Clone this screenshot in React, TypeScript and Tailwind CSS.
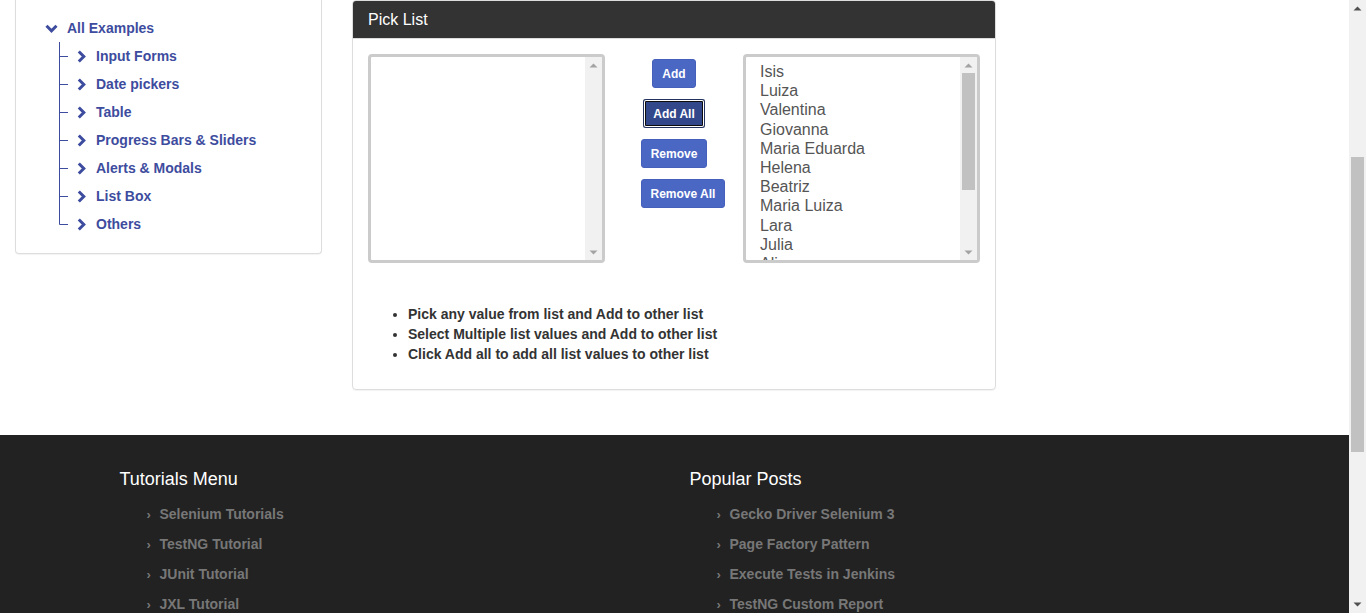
import React from 'react'

const examples = [
  'Input Forms',
  'Date pickers',
  'Table',
  'Progress Bars & Sliders',
  'Alerts & Modals',
  'List Box',
  'Others',
]

const names = [
  'Isis',
  'Luiza',
  'Valentina',
  'Giovanna',
  'Maria Eduarda',
  'Helena',
  'Beatriz',
  'Maria Luiza',
  'Lara',
  'Julia',
  'Alice',
]

const tutorials = ['Selenium Tutorials', 'TestNG Tutorial', 'JUnit Tutorial', 'JXL Tutorial']
const posts = ['Gecko Driver Selenium 3', 'Page Factory Pattern', 'Execute Tests in Jenkins', 'TestNG Custom Report']

function ChevronDown() {
  return (
    <svg width="13" height="9" viewBox="0 0 13 9" className="shrink-0">
      <polyline points="1.5,1.8 6.5,6.8 11.5,1.8" fill="none" stroke="#3d4c9e" strokeWidth="3" />
    </svg>
  )
}

function ChevronRight() {
  return (
    <svg width="9" height="13" viewBox="0 0 9 13" className="shrink-0">
      <polyline points="1.8,1.5 6.8,6.5 1.8,11.5" fill="none" stroke="#3d4c9e" strokeWidth="3" />
    </svg>
  )
}

function Connector({ last }: { last: boolean }) {
  return (
    <svg width="10" height="28" viewBox="0 0 10 28" className="shrink-0">
      <line x1="0.5" y1="0" x2="0.5" y2={last ? 14.5 : 28} stroke="#3d4c9e" strokeWidth="1" />
      <line x1="0.5" y1="14.5" x2="9" y2="14.5" stroke="#3d4c9e" strokeWidth="1" />
    </svg>
  )
}

function Arrow({ up, color }: { up: boolean; color: string }) {
  return (
    <svg width="9" height="5" viewBox="0 0 9 5">
      <polygon points={up ? '0.5,4.5 4.5,0.5 8.5,4.5' : '0.5,0.5 4.5,4.5 8.5,0.5'} fill={color} />
    </svg>
  )
}

function ListBox({ items, thumb }: { items: string[]; thumb?: boolean }) {
  return (
    <div className="w-[237px] h-[209px] border-[3px] border-[#cbcbcb] rounded-[4px] flex overflow-hidden bg-white">
      <div className="flex-1 overflow-hidden pl-[14px] pt-[5px] text-[16px] leading-[19.2px] text-[#555]">
        {items.map((n) => (
          <div key={n}>{n}</div>
        ))}
      </div>
      <div className="w-[17px] bg-[#f1f1f1] flex flex-col">
        <div className="h-[16px] flex items-center justify-center">
          <Arrow up color="#a3a3a3" />
        </div>
        <div className="flex-1 px-[2px]">
          {thumb && <div className="h-[117px] bg-[#c1c1c1]" />}
        </div>
        <div className="h-[16px] flex items-center justify-center">
          <Arrow up={false} color="#a3a3a3" />
        </div>
      </div>
    </div>
  )
}

function Btn({ label, focused }: { label: string; focused?: boolean }) {
  return (
    <div className="h-[29px] mb-[11px] whitespace-nowrap">
      <button
        className={
          focused
            ? 'h-[29px] px-[10px] rounded-[3px] text-[12px] font-bold text-white bg-[#32488b] shadow-[inset_0_0_0_1px_#22315e,inset_0_0_0_2px_#ffffff,inset_0_0_0_3px_#0d0d0d]'
            : 'h-[29px] px-[9px] rounded-[3px] text-[12px] font-bold text-white bg-[#4b67c4] border border-[#4560ba]'
        }
      >
        {label}
      </button>
    </div>
  )
}

function FooterCol({ title, links, pad }: { title: string; links: string[]; pad: string }) {
  return (
    <div className={`w-1/2 pr-[15px] ${pad}`}>
      <h3 className="text-[18px] leading-5 text-white">{title}</h3>
      <ul className="mt-[10px] pl-[27px]">
        {links.map((l) => (
          <li key={l} className="h-[30px] flex items-center text-[14px] font-bold text-[#777]">
            <span className="w-[13px] text-[13px] pt-[2px]">›</span>
            {l}
          </li>
        ))}
      </ul>
    </div>
  )
}

export default function App() {
  return (
    <div className="h-[613px] overflow-hidden flex bg-white font-['Liberation_Sans',Arial,sans-serif]">
      <div className="w-[1349px] shrink-0">
        <div className="h-[435px] flex">
          <div className="w-[337px] px-[15px]">
            <div className="border border-t-0 border-[#ddd] rounded-b-[4px] pt-[14px] pb-[15px] shadow-[0_1px_1px_rgba(0,0,0,0.05)]">
              <div className="h-[28px] pl-[29px] flex items-center">
                <ChevronDown />
                <span className="ml-[9px] text-[14px] font-bold text-[#3d4c9e]">All Examples</span>
              </div>
              <ul className="pl-[43px]">
                {examples.map((e, i) => (
                  <li key={e} className="h-[28px] flex items-center">
                    <Connector last={i === examples.length - 1} />
                    <span className="ml-[8px]">
                      <ChevronRight />
                    </span>
                    <span className="ml-[10px] text-[14px] font-bold text-[#3d4c9e]">{e}</span>
                  </li>
                ))}
              </ul>
            </div>
          </div>
          <div className="w-[674px] px-[15px]">
            <div className="border border-[#ddd] rounded-[4px] overflow-hidden shadow-[0_1px_1px_rgba(0,0,0,0.05)]">
              <div className="h-[38px] bg-[#333] px-[15px] flex items-center text-[16px] text-white border-b border-[#ddd]">
                Pick List
              </div>
              <div className="px-[15px] pt-[15px] pb-[25px]">
                <div className="flex">
                  <ListBox items={[]} />
                  <div className="flex-1 pt-[5px]">
                    <div className="w-[67px] mx-auto text-center">
                      <Btn label="Add" />
                      <Btn label="Add All" focused />
                      <Btn label="Remove" />
                      <Btn label="Remove All" />
                    </div>
                  </div>
                  <ListBox items={names} thumb />
                </div>
                <ul className="mt-[41px] pl-[40px] list-disc text-[14px] leading-5 font-bold text-[#333]">
                  <li>Pick any value from list and Add to other list</li>
                  <li>Select Multiple list values and Add to other list</li>
                  <li>Click Add all to add all list values to other list</li>
                </ul>
              </div>
            </div>
          </div>
        </div>
        <footer className="bg-[#222] h-[300px] pt-[34px]">
          <div className="w-[1170px] mx-auto flex">
            <FooterCol title="Tutorials Menu" links={tutorials} pad="pl-[30px]" />
            <FooterCol title="Popular Posts" links={posts} pad="pl-[15px]" />
          </div>
        </footer>
      </div>
      <div className="w-[17px] shrink-0 bg-[#f1f1f1] flex flex-col">
        <div className="h-[17px] flex items-center justify-center">
          <Arrow up color="#505050" />
        </div>
        <div className="h-[140px]" />
        <div className="h-[295px] mx-[2px] bg-[#c1c1c1]" />
        <div className="flex-1" />
        <div className="h-[17px] flex items-center justify-center">
          <Arrow up={false} color="#505050" />
        </div>
      </div>
    </div>
  )
}
